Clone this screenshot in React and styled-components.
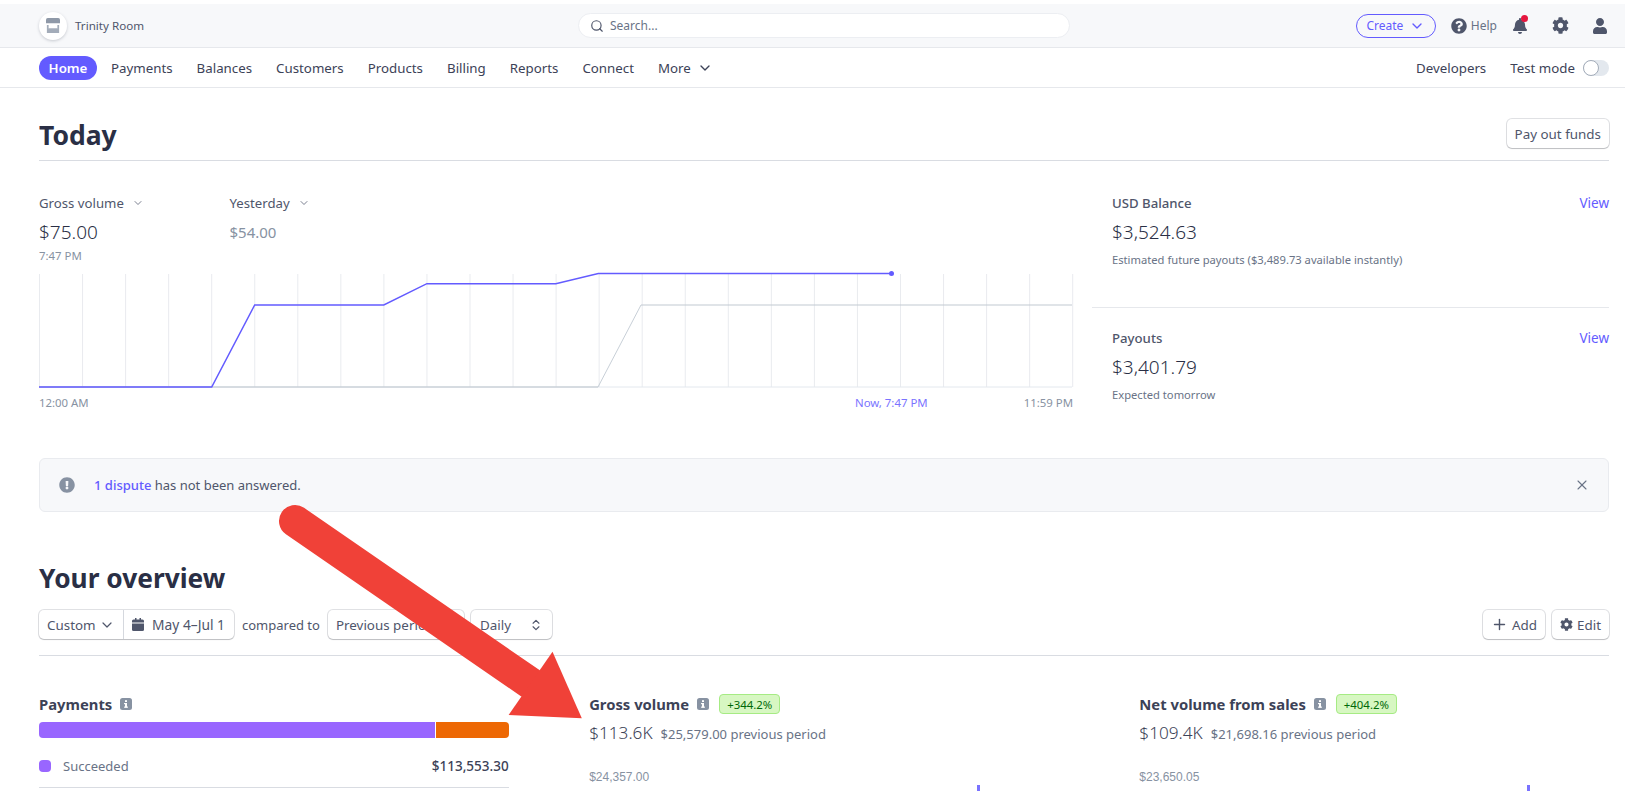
import React from "react";
import styled, { createGlobalStyle } from "styled-components";
import { ChevronDown, ChevronsUpDown, Plus, Search, X } from "lucide-react";
import { FaBell, FaCog, FaExclamationCircle, FaQuestionCircle, FaUser } from "react-icons/fa";

const GlobalStyle = createGlobalStyle`
  html, body {
    margin: 0;
    height: 100%;
    overflow: hidden;
    background: #fff;
  }
  body {
    font-family: "Noto Sans", "Open Sans", sans-serif;
    font-size: 13.3px;
    color: #3c4257;
  }
  * {
    box-sizing: border-box;
  }
`;

const navItems = ["Payments", "Balances", "Customers", "Products", "Billing", "Reports", "Connect"];

const gridX = Array.from({ length: 25 }, (_, i) => 0.5 + i * 43.05);

// small square "i" used next to the section titles
const InfoIcon = () => (
  <svg width="12" height="12" viewBox="0 0 12 12">
    <rect width="12" height="12" rx="2.5" fill="#8792a2" />
    <rect x="5" y="2.2" width="2" height="1.8" fill="#fff" />
    <rect x="5" y="5" width="2" height="4.6" fill="#fff" />
    <rect x="4" y="5" width="1.4" height="1.2" fill="#fff" />
    <rect x="4" y="8.6" width="4" height="1.1" fill="#fff" />
  </svg>
);

const StoreIcon = () => (
  <svg width="16" height="17" viewBox="0 0 16 17">
    <path d="M2 0h12a2 2 0 0 1 2 2v4H0V2a2 2 0 0 1 2-2z" fill="#8f99a8" />
    <path d="M1 8h2v4h10V8h2v9H1z" fill="#a3acb9" />
    <rect x="3" y="12" width="10" height="2" fill="#a3acb9" />
  </svg>
);

const CalendarIcon = () => (
  <svg width="12" height="13" viewBox="0 0 12 13">
    <path d="M3 0h1.5v1.5h3V0H9v1.5h1.5A1.5 1.5 0 0 1 12 3v1.5H0V3a1.5 1.5 0 0 1 1.5-1.5H3z" fill="#4f566b" />
    <path d="M0 5.5h12v6A1.5 1.5 0 0 1 10.5 13h-9A1.5 1.5 0 0 1 0 11.5z" fill="#4f566b" />
  </svg>
);

const TodayChart = () => (
  <svg width="1034" height="114" viewBox="0 0 1034 114" style={{ display: "block" }}>
    {gridX.map((x) => (
      <line key={x} x1={x} x2={x} y1="0" y2="113" stroke="#e9ebef" strokeWidth="1" />
    ))}
    <line x1="0" x2="1033" y1="113" y2="113" stroke="#e3e8ee" strokeWidth="1" />
    <line x1="0" y1="113" x2="559" y2="113" stroke="#bcc3cc" strokeWidth="1.2" />
    <line x1="559" y1="113" x2="602" y2="31" stroke="#c1c9d2" strokeWidth="0.9" />
    <line x1="602" y1="31" x2="1033" y2="31" stroke="#c1c9d2" strokeWidth="1.2" />
    <polyline
      points="0,113 172.7,113 215.7,31 344.8,31 387.9,9.7 516.8,9.7 559.3,-0.5 852,-0.5"
      fill="none"
      stroke="#635bff"
      strokeWidth="1.5"
    />
  </svg>
);

const App = () => {
  return (
    <Page>
      <GlobalStyle />
      <TopBar>
        <Account>
          <AccountBadge>
            <StoreIcon />
          </AccountBadge>
          <AccountName>Trinity Room</AccountName>
        </Account>
        <SearchBox>
          <Search size={14} color="#4f566b" strokeWidth={2} />
          <span>Search...</span>
        </SearchBox>
        <TopActions>
          <CreateButton>
            Create
            <ChevronDown size={16} strokeWidth={2} />
          </CreateButton>
          <HelpLink>
            <FaQuestionCircle size={16} color="#4f566b" />
            Help
          </HelpLink>
          <IconSlot>
            <FaBell size={16} color="#4f566b" />
            <RedDot />
          </IconSlot>
          <IconSlot>
            <FaCog size={17} color="#4f566b" />
          </IconSlot>
          <IconSlot>
            <FaUser size={16} color="#4f566b" />
          </IconSlot>
        </TopActions>
      </TopBar>

      <NavBar>
        <NavItems>
          <HomePill>Home</HomePill>
          {navItems.map((item) => (
            <NavItem key={item}>{item}</NavItem>
          ))}
          <NavItem>
            More
            <ChevronDown size={16} strokeWidth={2} color="#3c4257" />
          </NavItem>
        </NavItems>
        <NavRight>
          <NavItem>Developers</NavItem>
          <TestMode>
            Test mode
            <Toggle>
              <Knob />
            </Toggle>
          </TestMode>
        </NavRight>
      </NavBar>

      <Main>
        <TodayHeader>
          <PageTitle>Today</PageTitle>
          <Button>Pay out funds</Button>
        </TodayHeader>

        <TodayBody>
          <div>
            <Metrics>
              <MetricCol $width={190.5}>
                <MetricLabel>
                  Gross volume
                  <ChevronDown size={12} strokeWidth={1.5} />
                </MetricLabel>
                <BigValue>$75.00</BigValue>
                <TimeLabel>7:47 PM</TimeLabel>
              </MetricCol>
              <MetricCol>
                <MetricLabel>
                  Yesterday
                  <ChevronDown size={12} strokeWidth={1.5} />
                </MetricLabel>
                <PastValue>$54.00</PastValue>
              </MetricCol>
            </Metrics>
            <ChartWrap>
              <TodayChart />
              <ChartDot />
            </ChartWrap>
            <AxisRow>
              <span>12:00 AM</span>
              <NowLabel>Now, 7:47 PM</NowLabel>
              <span>11:59 PM</span>
            </AxisRow>
          </div>

          <SideColumn>
            <SidePanel $first>
              <SideHead>
                <SideTitle>USD Balance</SideTitle>
                <ViewLink>View</ViewLink>
              </SideHead>
              <BigValue>$3,524.63</BigValue>
              <SideNote>Estimated future payouts ($3,489.73 available instantly)</SideNote>
            </SidePanel>
            <SidePanel>
              <SideHead>
                <SideTitle>Payouts</SideTitle>
                <ViewLink>View</ViewLink>
              </SideHead>
              <BigValue>$3,401.79</BigValue>
              <SideNote>Expected tomorrow</SideNote>
            </SidePanel>
          </SideColumn>
        </TodayBody>

        <Banner>
          <BannerText>
            <FaExclamationCircle size={16} color="#8792a2" />
            <span>
              <BannerLink>1 dispute</BannerLink> has not been answered.
            </span>
          </BannerText>
          <X size={16} color="#697386" strokeWidth={1.6} />
        </Banner>

        <OverviewTitle>Your overview</OverviewTitle>
        <Controls>
          <ControlGroup>
            <ButtonGroup>
              <GroupPart $width={85}>
                Custom
                <ChevronDown size={16} strokeWidth={1.8} />
              </GroupPart>
              <DatePart $width={110}>
                <CalendarIcon />
                May 4–Jul 1
              </DatePart>
            </ButtonGroup>
            <ComparedTo>compared to</ComparedTo>
            <PeriodButton>Previous period</PeriodButton>
            <DailyButton>
              Daily
              <ChevronsUpDown size={14} strokeWidth={2} />
            </DailyButton>
          </ControlGroup>
          <ControlGroup>
            <Button>
              <Plus size={17} strokeWidth={2} />
              Add
            </Button>
            <Button>
              <FaCog size={13} color="#4f566b" />
              Edit
            </Button>
          </ControlGroup>
        </Controls>

        <OverviewGrid>
          <section>
            <CardTitle>
              Payments
              <InfoIcon />
            </CardTitle>
            <StatusBar>
              <StatusSegment $color="#9966ff" $width={396} />
              <StatusSegment $color="#ed6804" />
            </StatusBar>
            <StatusRow>
              <StatusName>
                <StatusDot />
                Succeeded
              </StatusName>
              <StatusAmount>$113,553.30</StatusAmount>
            </StatusRow>
          </section>

          <section>
            <CardTitle>
              Gross volume
              <InfoIcon />
              <Badge>+344.2%</Badge>
            </CardTitle>
            <CardValues>
              <CardValue>$113.6K</CardValue>
              <CardPrevious>$25,579.00 previous period</CardPrevious>
            </CardValues>
            <ChartMax>$24,357.00</ChartMax>
            <MiniBar />
          </section>

          <section>
            <CardTitle>
              Net volume from sales
              <InfoIcon />
              <Badge>+404.2%</Badge>
            </CardTitle>
            <CardValues>
              <CardValue>$109.4K</CardValue>
              <CardPrevious>$21,698.16 previous period</CardPrevious>
            </CardValues>
            <ChartMax>$23,650.05</ChartMax>
            <MiniBar />
          </section>
        </OverviewGrid>
      </Main>

      {/* red annotation arrow drawn over the page */}
      <ArrowLayer viewBox="0 0 1625 791">
        <line x1="295" y1="521" x2="530" y2="683" stroke="#f04138" strokeWidth="32" strokeLinecap="round" />
        <polygon points="552.5,651.7 581.8,718.3 508.6,715" fill="#f04138" />
      </ArrowLayer>
    </Page>
  );
};

const Page = styled.div`
  position: relative;
  height: 791px;
  overflow: hidden;
  padding-top: 4px;
`;

const TopBar = styled.header`
  height: 44px;
  padding: 0 16px 0 39px;
  background: #f7f8fa;
  border-bottom: 1px solid #e6e8ec;
  display: grid;
  grid-template-columns: 1fr 492px 1fr;
  align-items: center;
`;

const Account = styled.div`
  display: flex;
  align-items: center;
  gap: 8px;
`;

const AccountBadge = styled.div`
  width: 28px;
  height: 28px;
  border-radius: 50%;
  background: #fff;
  box-shadow: 0 1px 3px rgba(60, 66, 87, 0.25);
  display: flex;
  align-items: center;
  justify-content: center;
  svg {
    width: 14px;
    height: 15px;
  }
`;

const AccountName = styled.span`
  font-size: 11.6px;
  color: #4f566b;
`;

const SearchBox = styled.div`
  height: 25px;
  border-radius: 13px;
  background: #fff;
  border: 1px solid #eceef2;
  display: flex;
  align-items: center;
  gap: 6px;
  padding-left: 11px;
  font-size: 12px;
  color: #697386;
`;

const TopActions = styled.div`
  display: flex;
  justify-content: flex-end;
  align-items: center;
`;

const CreateButton = styled.div`
  width: 80px;
  height: 24px;
  border: 1px solid #635bff;
  border-radius: 12px;
  color: #635bff;
  font-size: 12px;
  display: flex;
  align-items: center;
  justify-content: center;
  gap: 6px;
  margin-right: 15px;
`;

const HelpLink = styled.div`
  display: flex;
  align-items: center;
  gap: 4px;
  font-size: 12px;
  color: #697386;
  margin-right: 3px;
`;

const IconSlot = styled.div`
  position: relative;
  width: 40px;
  height: 24px;
  display: flex;
  align-items: center;
  justify-content: center;
  &:last-child {
    margin-right: -11px;
  }
`;

const RedDot = styled.span`
  position: absolute;
  top: 1px;
  left: 21px;
  width: 7px;
  height: 7px;
  border-radius: 50%;
  background: #e5173f;
`;

const NavBar = styled.nav`
  height: 40px;
  padding: 0 16px 0 39px;
  border-bottom: 1px solid #e6e8ec;
  display: flex;
  align-items: center;
  justify-content: space-between;
`;

const NavItems = styled.div`
  display: flex;
  align-items: center;
  gap: 24px;
`;

const HomePill = styled.div`
  width: 58px;
  height: 24px;
  margin-right: -10px;
  border-radius: 12px;
  background: #635bff;
  color: #fff;
  font-size: 13.3px;
  font-weight: 600;
  display: flex;
  align-items: center;
  justify-content: center;
`;

const NavItem = styled.div`
  display: flex;
  align-items: center;
  gap: 6px;
  font-size: 13.3px;
  color: #3c4257;
`;

const NavRight = styled.div`
  display: flex;
  align-items: center;
  gap: 24px;
`;

const TestMode = styled(NavItem)`
  gap: 8px;
`;

const Toggle = styled.div`
  position: relative;
  width: 26px;
  height: 16px;
  border-radius: 8px;
  background: #e3e8ee;
`;

const Knob = styled.span`
  position: absolute;
  left: 0;
  top: 0;
  width: 16px;
  height: 16px;
  border-radius: 50%;
  background: #fff;
  border: 1px solid #a3acb9;
`;

const Main = styled.main`
  padding: 0 16px 0 39px;
`;

const TodayHeader = styled.div`
  display: flex;
  justify-content: space-between;
  align-items: flex-start;
  padding: 31px 0 9px;
  border-bottom: 1px solid #d9dce2;
`;

const PageTitle = styled.h1`
  margin: 0;
  font-size: 26.5px;
  line-height: 32px;
  font-weight: 700;
  color: #2a2f45;
`;

const Button = styled.div`
  height: 29px;
  padding: 0 8px;
  display: inline-flex;
  align-items: center;
  gap: 4px;
  background: #fff;
  border-radius: 5px;
  font-size: 13.4px;
  color: #4f566b;
  white-space: nowrap;
  box-shadow: 0 0 0 1px rgba(60, 66, 87, 0.16), 0 1px 1px rgba(0, 0, 0, 0.16);
`;

const TodayBody = styled.div`
  display: grid;
  grid-template-columns: 1034px 1fr;
  column-gap: 19px;
`;

const Metrics = styled.div`
  display: flex;
  padding-top: 33px;
`;

const MetricCol = styled.div`
  width: ${(p) => (p.$width ? `${p.$width}px` : "auto")};
`;

const MetricLabel = styled.div`
  display: flex;
  align-items: center;
  gap: 8px;
  font-size: 13.2px;
  line-height: 18px;
  color: #4f566b;
`;

const BigValue = styled.div`
  margin-top: 7px;
  font-size: 19px;
  font-weight: 300;
  line-height: 26px;
  color: #2a2f45;
`;

const PastValue = styled(BigValue)`
  font-size: 15px;
  font-weight: 400;
  color: #8792a2;
`;

const TimeLabel = styled.div`
  margin-top: 3px;
  font-size: 11.4px;
  line-height: 16px;
  color: #8792a2;
`;

const ChartWrap = styled.div`
  position: relative;
  margin-top: 10px;
  height: 114px;
  svg {
    overflow: visible;
  }
`;

const ChartDot = styled.span`
  position: absolute;
  left: 850px;
  top: -3px;
  width: 5px;
  height: 5px;
  border-radius: 50%;
  background: #635bff;
`;

const AxisRow = styled.div`
  position: relative;
  margin-top: 7px;
  display: flex;
  justify-content: space-between;
  font-size: 11.4px;
  line-height: 16px;
  color: #8792a2;
`;

const NowLabel = styled.span`
  position: absolute;
  left: 816px;
  color: #7a73ff;
`;

const SideColumn = styled.div`
  display: flex;
  flex-direction: column;
`;

const SidePanel = styled.div`
  padding: ${(p) => (p.$first ? "33px 0 0 20px" : "21px 0 0 20px")};
  height: ${(p) => (p.$first ? "147px" : "auto")};
  border-bottom: ${(p) => (p.$first ? "1px solid #e6e8ec" : "none")};
`;

const SideHead = styled.div`
  display: flex;
  justify-content: space-between;
  line-height: 18px;
`;

const SideTitle = styled.div`
  font-size: 13.2px;
  font-weight: 500;
  color: #4f566b;
`;

const ViewLink = styled.a`
  font-size: 13.5px;
  color: #635bff;
`;

const SideNote = styled.div`
  margin-top: 7px;
  font-size: 11.2px;
  line-height: 16px;
  color: #697386;
`;

const Banner = styled.div`
  height: 54px;
  margin-top: 47px;
  padding: 0 18px 0 19px;
  background: #f7f8fa;
  border: 1px solid #e9ebef;
  border-radius: 6px;
  display: flex;
  align-items: center;
  justify-content: space-between;
`;

const BannerText = styled.div`
  display: flex;
  align-items: center;
  gap: 19px;
  font-size: 13px;
  color: #4f566b;
`;

const BannerLink = styled.a`
  color: #635bff;
  font-weight: 500;
`;

const OverviewTitle = styled.h2`
  margin: 49px 0 0;
  font-size: 26.3px;
  line-height: 34px;
  font-weight: 700;
  color: #2a2f45;
`;

const Controls = styled.div`
  margin-top: 15px;
  padding-bottom: 16px;
  border-bottom: 1px solid #d9dce2;
  display: flex;
  justify-content: space-between;
`;

const ControlGroup = styled.div`
  display: flex;
  align-items: center;
  gap: 7px;
`;

const ButtonGroup = styled.div`
  display: flex;
  height: 29px;
  background: #fff;
  border-radius: 5px;
  box-shadow: 0 0 0 1px rgba(60, 66, 87, 0.16), 0 1px 1px rgba(0, 0, 0, 0.16);
`;

const GroupPart = styled.div`
  width: ${(p) => p.$width}px;
  padding: 0 8px;
  display: flex;
  align-items: center;
  justify-content: space-between;
  font-size: 13.4px;
  color: #4f566b;
  white-space: nowrap;
  border-right: 1px solid #d5d8de;
`;

const DatePart = styled(GroupPart)`
  justify-content: flex-start;
  gap: 8px;
  font-size: 13.8px;
  border-right: none;
`;

const ComparedTo = styled.span`
  margin: 0 1px;
  font-size: 13px;
  color: #4f566b;
`;

const PeriodButton = styled(Button)`
  width: 136px;
`;

const DailyButton = styled(Button)`
  width: 81px;
  padding: 0 9px;
  justify-content: space-between;
`;

const OverviewGrid = styled.div`
  display: grid;
  grid-template-columns: repeat(3, 1fr);
  column-gap: 80.5px;
  padding-top: 38px;
`;

const CardTitle = styled.div`
  display: flex;
  align-items: center;
  gap: 8px;
  height: 20px;
  font-size: 14.8px;
  font-weight: 700;
  color: #3c4257;
`;

const Badge = styled.span`
  height: 20px;
  padding: 0 7px;
  margin-left: 2px;
  display: inline-flex;
  align-items: center;
  font-size: 11.4px;
  font-weight: 400;
  color: #006908;
  background: #d7f7c2;
  border: 1px solid #a6eb84;
  border-radius: 4px;
`;

const StatusBar = styled.div`
  margin-top: 8px;
  height: 16px;
  display: flex;
  gap: 1px;
  border-radius: 4px;
  overflow: hidden;
`;

const StatusSegment = styled.div`
  background: ${(p) => p.$color};
  flex: ${(p) => (p.$width ? `0 0 ${p.$width}px` : "1")};
`;

const StatusRow = styled.div`
  margin-top: 18px;
  padding-bottom: 11px;
  border-bottom: 1px solid #d9dce2;
  display: flex;
  justify-content: space-between;
  align-items: center;
  line-height: 20px;
`;

const StatusName = styled.div`
  display: flex;
  align-items: center;
  gap: 12px;
  font-size: 13px;
  color: #697386;
`;

const StatusDot = styled.span`
  width: 12px;
  height: 12px;
  border-radius: 4px;
  background: #9966ff;
`;

const StatusAmount = styled.span`
  font-size: 13.5px;
  font-weight: 500;
  color: #3c4257;
`;

const CardValues = styled.div`
  margin-top: 6px;
  display: flex;
  align-items: baseline;
  gap: 8px;
  line-height: 26px;
`;

const CardValue = styled.span`
  font-size: 17.2px;
  font-weight: 300;
  color: #3c4257;
`;

const CardPrevious = styled.span`
  font-size: 13px;
  color: #697386;
`;

const ChartMax = styled.div`
  margin-top: 23px;
  font-family: "Liberation Sans", Arial, sans-serif;
  font-size: 12px;
  line-height: 14px;
  color: #8792a2;
`;

const MiniBar = styled.div`
  width: 3px;
  height: 20px;
  margin: 1px 0 0 388px;
  background: #7a73ff;
`;

const ArrowLayer = styled.svg`
  position: absolute;
  left: 0;
  top: 0;
  width: 1625px;
  height: 791px;
  pointer-events: none;
`;

export default App;
